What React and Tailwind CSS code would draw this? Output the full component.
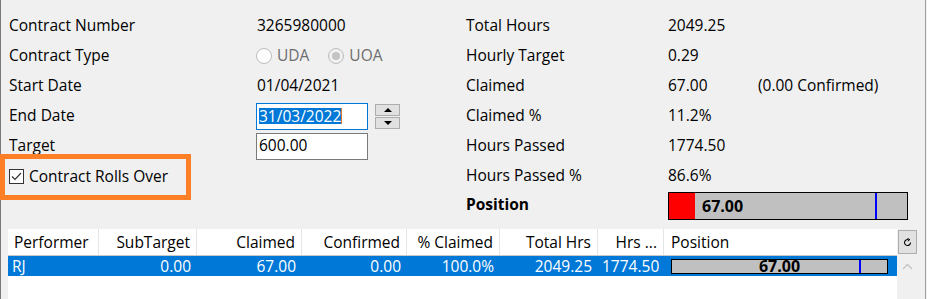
import React from 'react';

// Contract summary panel — details on top, performer grid below
function Row({ label, bold, children }) {
    return (
        <div className={bold ? 'flex h-[30px] items-center' : 'flex h-[30px] items-center pt-[2px]'}>
            <div className={bold ? 'w-[202px] font-bold' : 'w-[202px]'}>{label}</div>
            <div className="flex items-center">{children}</div>
        </div>
    );
}

function LeftRow({ label, children }) {
    return (
        <div className="flex h-[30px] items-center pt-[2px]">
            <div className="w-[248px]">{label}</div>
            <div className="flex items-center">{children}</div>
        </div>
    );
}

function Radio({ checked, label }) {
    return (
        <div className="flex items-center text-[#6d6d6d]">
            <span className={`flex h-[16px] w-[16px] items-center justify-center rounded-full border border-[#bcbcbc] ${checked ? 'bg-[#f0f0f0]' : 'bg-white'}`}>
                {checked && <span className="h-[8px] w-[8px] rounded-full bg-[#c4c4c4]" />}
            </span>
            <span className="ml-[5px]">{label}</span>
        </div>
    );
}

function Spinner() {
    return (
        <div className="ml-[7px] flex flex-col gap-[1px]">
            <div className="flex h-[12px] w-[25px] items-center justify-center border border-[#adadad] bg-[#e1e1e1]">
                <svg width="8" height="4" viewBox="0 0 8 4"><path d="M0 4 L4 0 L8 4 Z" fill="#000" /></svg>
            </div>
            <div className="flex h-[12px] w-[25px] items-center justify-center border border-[#adadad] bg-[#e1e1e1]">
                <svg width="8" height="4" viewBox="0 0 8 4"><path d="M0 0 L4 4 L8 0 Z" fill="#000" /></svg>
            </div>
        </div>
    );
}

const columns = [
    { name: 'Performer', w: 'w-[91px]', align: 'text-left' },
    { name: 'SubTarget', w: 'w-[98px]', align: 'text-right' },
    { name: 'Claimed', w: 'w-[105px]', align: 'text-right' },
    { name: 'Confirmed', w: 'w-[105px]', align: 'text-right' },
    { name: '% Claimed', w: 'w-[93px]', align: 'text-right' },
    { name: 'Total Hrs', w: 'w-[98px]', align: 'text-right' },
    { name: 'Hrs ...', w: 'w-[66px]', align: 'text-right' },
];

const row = ['RJ', '0.00', '67.00', '0.00', '100.0%', '2049.25', '1774.50'];

export default function App() {
    return (
        <div className="h-[299px] w-[927px] overflow-hidden bg-[#f0f0f0] font-['Open_Sans','Liberation_Sans',sans-serif] text-[15.5px] text-black">
            <div className="relative h-[299px] w-[926px] border-l border-r border-l-[#7a7a7a] border-r-[#a0a0a0]">
                {/* details */}
                <div className="flex pl-[8px] pt-[10px]">
                    <div className="w-[457px]">
                        <LeftRow label="Contract Number">3265980000</LeftRow>
                        <LeftRow label="Contract Type">
                            <div className="-ml-[1px] flex items-center gap-[19px]">
                                <Radio label="UDA" />
                                <Radio checked label="UOA" />
                            </div>
                        </LeftRow>
                        <LeftRow label="Start Date">01/04/2021</LeftRow>
                        <LeftRow label="End Date">
                            <div className="-ml-[1px] flex h-[27px] w-[112px] items-center border border-[#0078d7] bg-white pl-[2px]">
                                <span className="bg-[#0078d7] leading-[16px] text-white">31/03/2022</span>
                                <span className="h-[16px] w-[1px] bg-[#e07a2a]" />
                            </div>
                            <Spinner />
                        </LeftRow>
                        <LeftRow label="Target">
                            <div className="-ml-[1px] flex h-[27px] w-[112px] items-center border border-[#7a7a7a] bg-white pl-[2px]">
                                600.00
                            </div>
                        </LeftRow>
                        <div className="flex h-[30px] items-center pt-[3px]">
                            <span className="flex h-[15px] w-[15px] items-center justify-center border border-[#333] bg-white">
                                <svg width="11" height="9" viewBox="0 0 11 9">
                                    <path d="M1 4.5 L4 7.5 L10 1" fill="none" stroke="#333" strokeWidth="1.2" />
                                </svg>
                            </span>
                            <span className="ml-[5px]">Contract Rolls Over</span>
                        </div>
                    </div>
                    <div>
                        <Row label="Total Hours">2049.25</Row>
                        <Row label="Hourly Target">0.29</Row>
                        <Row label="Claimed">
                            <span className="w-[90px]">67.00</span>
                            <span>(0.00 Confirmed)</span>
                        </Row>
                        <Row label="Claimed %">11.2%</Row>
                        <Row label="Hours Passed">1774.50</Row>
                        <Row label="Hours Passed %">86.6%</Row>
                        <Row label="Position" bold>
                            <div className="mt-[2px] flex h-[28px] w-[240px] items-stretch border border-black bg-[#c0c0c0]">
                                <div className="w-[26px] bg-[#ff0000]" />
                                <div className="flex w-[180px] items-center pl-[7px] text-[16px] font-bold">67.00</div>
                                <div className="w-[2px] bg-[#0000ff]" />
                            </div>
                        </Row>
                    </div>
                </div>

                {/* orange highlight annotation */}
                <div className="absolute left-[-1px] top-[154px] h-[46px] w-[191px] border-[5px] border-[#ff7f27]" />

                {/* grid */}
                <div className="mt-[9px] flex">
                    <div className="ml-[7px] h-[70px] w-[889px] bg-white">
                        <div className="flex h-[27px] border-b border-[#c8c8c8]">
                            {columns.map((c) => (
                                <div key={c.name} className={`${c.w} ${c.align} flex-none border-r border-[#e5e5e5] px-[6px] leading-[26px]`}>
                                    {c.name}
                                </div>
                            ))}
                            <div className="flex-1 px-[7px] leading-[26px]">Position</div>
                        </div>
                        <div className="flex h-[20px] bg-[#0078d7] text-white">
                            {columns.map((c, i) => (
                                <div key={c.name} className={`${c.w} ${c.align} flex-none pl-[4px] pr-[6px] leading-[20px]`}>
                                    {row[i]}
                                </div>
                            ))}
                            <div className="flex flex-1 items-center pl-[7px] pr-[9px]">
                                <div className="relative flex h-[15px] w-full items-center justify-center border border-black bg-[#c0c0c0] text-[16px] font-bold leading-none text-black">
                                    67.00
                                    <span className="absolute left-[187px] top-0 h-full w-[2px] bg-[#0000ff]" />
                                </div>
                            </div>
                        </div>
                    </div>
                    <div className="flex w-[28px] flex-col items-center pt-[1px]">
                        <div className="ml-[-8px] flex h-[24px] w-[19px] items-center justify-center border border-[#adadad] bg-[#e1e1e1]">
                            <svg width="9" height="9" viewBox="0 0 9 9">
                                <path d="M7.5 4.5 A3 3 0 1 1 5.5 1.7" fill="none" stroke="#000" strokeWidth="1.1" />
                                <path d="M4.5 0.3 L6.8 1.6 L4.8 3.2" fill="none" stroke="#000" strokeWidth="1" />
                            </svg>
                        </div>
                        <svg className="ml-[-8px] mt-[9px]" width="11" height="7" viewBox="0 0 11 7">
                            <path d="M1 6 L5.5 1.5 L10 6" fill="none" stroke="#c4c4c4" strokeWidth="1.4" />
                        </svg>
                    </div>
                </div>
            </div>
        </div>
    );
}
